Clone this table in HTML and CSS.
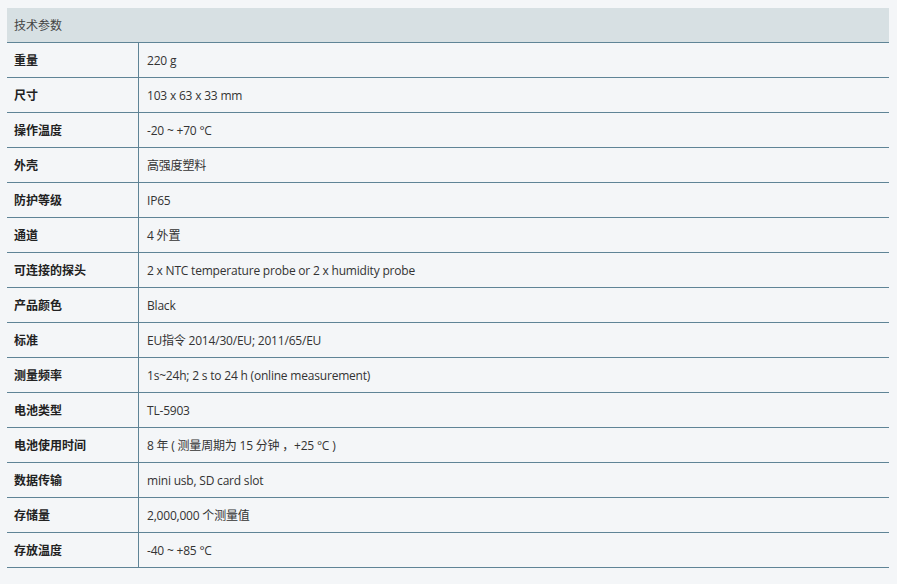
FILE: index.html
```html
<!DOCTYPE html>
<html lang="zh">
<head>
<meta charset="utf-8">
<link rel="stylesheet" href="styles.css">
</head>
<body>
<div class="page">
<table class="spec">
  <thead>
    <tr><th colspan="2">技术参数</th></tr>
  </thead>
  <tbody>
    <tr><td class="k">重量</td><td class="v">220 g</td></tr>
    <tr><td class="k">尺寸</td><td class="v">103 x 63 x 33 mm</td></tr>
    <tr><td class="k">操作温度</td><td class="v">-20 ~ +70 °C</td></tr>
    <tr><td class="k">外壳</td><td class="v">高强度塑料</td></tr>
    <tr><td class="k">防护等级</td><td class="v">IP65</td></tr>
    <tr><td class="k">通道</td><td class="v">4 外置</td></tr>
    <tr><td class="k">可连接的探头</td><td class="v">2 x NTC temperature probe or 2 x humidity probe</td></tr>
    <tr><td class="k">产品颜色</td><td class="v">Black</td></tr>
    <tr><td class="k">标准</td><td class="v">EU指令 2014/30/EU; 2011/65/EU</td></tr>
    <tr><td class="k">测量频率</td><td class="v">1s~24h; 2 s to 24 h (online measurement)</td></tr>
    <tr><td class="k">电池类型</td><td class="v">TL-5903</td></tr>
    <tr><td class="k">电池使用时间</td><td class="v">8 年 ( 测量周期为 15 分钟 ，+25 °C )</td></tr>
    <tr><td class="k">数据传输</td><td class="v">mini usb, SD card slot</td></tr>
    <tr><td class="k">存储量</td><td class="v">2,000,000 个测量值</td></tr>
    <tr><td class="k">存放温度</td><td class="v">-40 ~ +85 °C</td></tr>
  </tbody>
</table>
</div>
</body>
</html>
```

FILE: styles.css
```css
html, body {
  margin: 0;
  padding: 0;
  background: #f4f6f8;
}
.page {
  padding: 8px 8px 0 7px;
}
.spec {
  width: 882px;
  border-collapse: collapse;
  font-family: "Open Sans", "Noto Sans CJK SC", sans-serif;
  font-size: 12px;
  color: #333;
}
.spec th {
  background: #d7e0e3;
  text-align: left;
  font-weight: normal;
  color: #444;
  height: 34px;
  padding: 0 7px;
  border-bottom: 1px solid #5f8496;
}
.spec td {
  height: 34px;
  padding: 0 7px;
  border-bottom: 1px solid #5f8496;
}
.spec td.k {
  width: 117px;
  font-weight: bold;
  color: #222;
  border-right: 1px solid #5f8496;
}
.spec td.v {
  padding-left: 8px;
  letter-spacing: -0.2px;
}
```
